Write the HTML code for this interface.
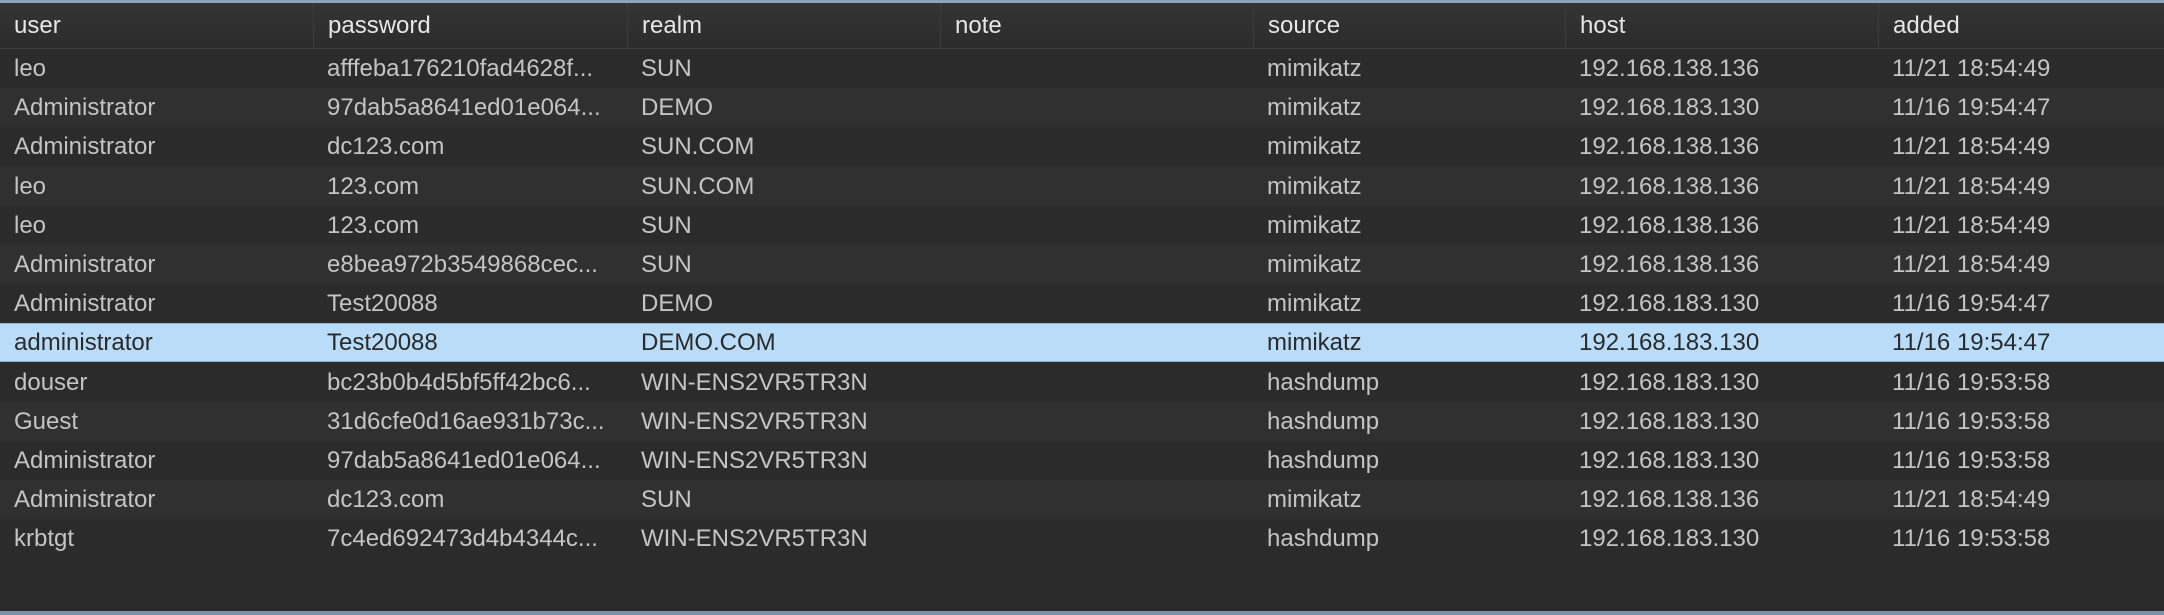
<!DOCTYPE html>
<html><head><style>
html,body{margin:0;padding:0;width:2164px;height:615px;overflow:hidden;background:#2b2b2b;font-family:"Liberation Sans","DejaVu Sans",sans-serif;position:relative;}
.top{position:absolute;left:0;top:0;width:2164px;height:3px;background:#8fa3b8;}
.bot{position:absolute;left:0;top:611px;width:2164px;height:4px;background:#7d91a6;}
.hdr{position:absolute;left:0;top:3px;width:2164px;height:45px;background:linear-gradient(#343434,#2c2c2c);border-bottom:1px solid #3f3f3f;}
.hdr span{position:absolute;top:0;height:45px;line-height:46px;color:#e6e6e6;font-size:24px;padding-left:14px;box-sizing:border-box;border-left:1px solid #3c3c3c;}
.r{position:absolute;left:0;width:2164px;height:39px;background:#2b2b2b;}
.a{background:#303030;}
.r span{position:absolute;top:0;height:39px;line-height:39px;color:#c4c4c4;font-size:24px;padding-left:14px;white-space:nowrap;}
.sel{background:#b9dcf9;border-top:1px solid #8fb3d1;border-bottom:1px solid #8fb3d1;box-sizing:border-box;}
.sel span{color:#2a2a2a;line-height:37px;}
.c0{left:0}.c1{left:313px}.c2{left:627px}.c4{left:1253px}.c5{left:1565px}.c6{left:1878px}
</style></head><body>
<div class="top"></div>
<div class="hdr">
<span style="left:0;border-left:none">user</span>
<span style="left:313px">password</span>
<span style="left:627px">realm</span>
<span style="left:940px">note</span>
<span style="left:1253px">source</span>
<span style="left:1565px">host</span>
<span style="left:1878px">added</span>
</div>
<div class="r" style="top:49px"><span class="c0">leo</span><span class="c1">afffeba176210fad4628f...</span><span class="c2">SUN</span><span class="c4">mimikatz</span><span class="c5">192.168.138.136</span><span class="c6">11/21 18:54:49</span></div>
<div class="r a" style="top:88px"><span class="c0">Administrator</span><span class="c1">97dab5a8641ed01e064...</span><span class="c2">DEMO</span><span class="c4">mimikatz</span><span class="c5">192.168.183.130</span><span class="c6">11/16 19:54:47</span></div>
<div class="r" style="top:127px"><span class="c0">Administrator</span><span class="c1">dc123.com</span><span class="c2">SUN.COM</span><span class="c4">mimikatz</span><span class="c5">192.168.138.136</span><span class="c6">11/21 18:54:49</span></div>
<div class="r a" style="top:167px"><span class="c0">leo</span><span class="c1">123.com</span><span class="c2">SUN.COM</span><span class="c4">mimikatz</span><span class="c5">192.168.138.136</span><span class="c6">11/21 18:54:49</span></div>
<div class="r" style="top:206px"><span class="c0">leo</span><span class="c1">123.com</span><span class="c2">SUN</span><span class="c4">mimikatz</span><span class="c5">192.168.138.136</span><span class="c6">11/21 18:54:49</span></div>
<div class="r a" style="top:245px"><span class="c0">Administrator</span><span class="c1">e8bea972b3549868cec...</span><span class="c2">SUN</span><span class="c4">mimikatz</span><span class="c5">192.168.138.136</span><span class="c6">11/21 18:54:49</span></div>
<div class="r" style="top:284px"><span class="c0">Administrator</span><span class="c1">Test20088</span><span class="c2">DEMO</span><span class="c4">mimikatz</span><span class="c5">192.168.183.130</span><span class="c6">11/16 19:54:47</span></div>
<div class="r sel" style="top:323px"><span class="c0">administrator</span><span class="c1">Test20088</span><span class="c2">DEMO.COM</span><span class="c4">mimikatz</span><span class="c5">192.168.183.130</span><span class="c6">11/16 19:54:47</span></div>
<div class="r" style="top:363px"><span class="c0">douser</span><span class="c1">bc23b0b4d5bf5ff42bc6...</span><span class="c2">WIN-ENS2VR5TR3N</span><span class="c4">hashdump</span><span class="c5">192.168.183.130</span><span class="c6">11/16 19:53:58</span></div>
<div class="r a" style="top:402px"><span class="c0">Guest</span><span class="c1">31d6cfe0d16ae931b73c...</span><span class="c2">WIN-ENS2VR5TR3N</span><span class="c4">hashdump</span><span class="c5">192.168.183.130</span><span class="c6">11/16 19:53:58</span></div>
<div class="r" style="top:441px"><span class="c0">Administrator</span><span class="c1">97dab5a8641ed01e064...</span><span class="c2">WIN-ENS2VR5TR3N</span><span class="c4">hashdump</span><span class="c5">192.168.183.130</span><span class="c6">11/16 19:53:58</span></div>
<div class="r a" style="top:480px"><span class="c0">Administrator</span><span class="c1">dc123.com</span><span class="c2">SUN</span><span class="c4">mimikatz</span><span class="c5">192.168.138.136</span><span class="c6">11/21 18:54:49</span></div>
<div class="r" style="top:519px"><span class="c0">krbtgt</span><span class="c1">7c4ed692473d4b4344c...</span><span class="c2">WIN-ENS2VR5TR3N</span><span class="c4">hashdump</span><span class="c5">192.168.183.130</span><span class="c6">11/16 19:53:58</span></div>
<div class="bot"></div>
</body></html>
